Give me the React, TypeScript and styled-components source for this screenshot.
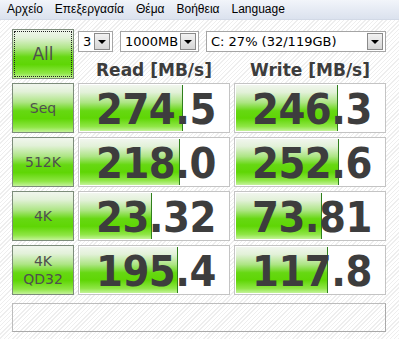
import React from "react";
import styled, { createGlobalStyle } from "styled-components";

const GlobalStyle = createGlobalStyle`
  html, body {
    margin: 0;
    padding: 0;
  }
  body {
    width: 399px;
    height: 339px;
    overflow: hidden;
    font-family: "DejaVu Sans", Verdana, sans-serif;
    background-color: #ffffff;
    background-image: repeating-linear-gradient(
      135deg,
      #ffffff 0px,
      #ffffff 2px,
      #eeeeee 2px,
      #eeeeee 3px
    );
  }
`;

const MenuBar = styled.nav`
  display: flex;
  height: 19px;
  align-items: center;
  padding-left: 1px;
  background: linear-gradient(to bottom, #f2f5fa 0%, #e6ebf4 50%, #dbe2ee 100%);
  border-bottom: 1px solid #d2d9e6;
  font-family: "Liberation Sans", Arial, sans-serif;
  font-size: 12px;
  color: #000000;
`;

const MenuItem = styled.span`
  padding: 0 6px;
  line-height: 19px;
`;

const Main = styled.main`
  display: grid;
  grid-template-columns: 62px 152px 152px;
  grid-auto-rows: 50px;
  column-gap: 4px;
  row-gap: 4px;
  padding: 9px 0 0 12px;
`;

const GREEN = `linear-gradient(
  to bottom,
  #f1f6ee 0%,
  #e2f1d8 16%,
  #ade584 38%,
  #66d812 56%,
  #5fd605 72%,
  #8fe646 90%,
  #c4f39a 100%
)`;

const TestButton = styled.div<{ $big?: boolean }>`
  box-sizing: border-box;
  display: flex;
  flex-direction: column;
  align-items: center;
  justify-content: center;
  position: relative;
  border: 1px solid #7c8c7a;
  background: ${GREEN};
  color: #4f4f4f;
  font-family: "DejaVu Sans", sans-serif;
  font-size: ${(p) => (p.$big ? "17px" : "14px")};
  line-height: 18px;
`;

const FocusRing = styled.span`
  position: absolute;
  inset: 1px;
  border: 1px dotted #222222;
`;

const TopArea = styled.div`
  grid-column: 2 / span 2;
  display: grid;
  grid-template-columns: 152px 152px;
  grid-template-rows: 21px 1fr;
  column-gap: 4px;
  padding-top: 2px;
`;

const ComboRow = styled.div`
  grid-column: 1 / span 2;
  display: flex;
  gap: 7px;
`;

const Combo = styled.div<{ $w: number }>`
  box-sizing: border-box;
  width: ${(p) => p.$w}px;
  height: 21px;
  display: flex;
  align-items: center;
  justify-content: space-between;
  padding: 1px 2px 1px 4px;
  background: #ffffff;
  border: 1px solid #a5a5a5;
  font-family: "DejaVu Sans", sans-serif;
  font-size: 13px;
  color: #000000;
`;

const DropButton = styled.span`
  box-sizing: border-box;
  width: 16px;
  height: 17px;
  display: flex;
  align-items: center;
  justify-content: center;
  border: 1px solid #8a8a8a;
  background: linear-gradient(to bottom, #f2f2f2 0%, #e4e4e4 50%, #d6d6d6 100%);
`;

const Arrow = styled.span`
  width: 0;
  height: 0;
  border-left: 4px solid transparent;
  border-right: 4px solid transparent;
  border-top: 4px solid #000000;
`;

const Header = styled.div`
  display: flex;
  justify-content: center;
  align-items: center;
  font-family: "DejaVu Sans", Verdana, sans-serif;
  font-weight: bold;
  font-size: 17px;
  color: #3c3c3c;
  padding-top: 8px;
`;

const Cell = styled.div`
  box-sizing: border-box;
  position: relative;
  border: 1px solid #c4c4c4;
  background: #ffffff;
  overflow: hidden;
`;

const Bar = styled.div`
  position: absolute;
  left: 1px;
  top: 1px;
  bottom: 1px;
  background: ${GREEN};
  border-right: 1px solid #2f7f1c;
`;

const Value = styled.div`
  position: relative;
  padding-left: 17px;
  height: 100%;
  display: flex;
  align-items: center;
  font-family: "DejaVu Sans Condensed", "DejaVu Sans", sans-serif;
  font-weight: bold;
  font-size: 43px;
  letter-spacing: -0.5px;
  color: #3d3d3d;
  line-height: 1;
  padding-top: 3px;
  box-sizing: border-box;
`;

const Comment = styled.div`
  grid-column: 1 / span 3;
  box-sizing: border-box;
  height: 29px;
  margin-top: 4px;
  border: 1px solid #a9a9a9;
  border-top-color: #bcbcbc;
  border-left-color: #bcbcbc;
`;

type Row = { label: string[]; read: string; readBar: number; write: string; writeBar: number };

const rows: Row[] = [
  { label: ["Seq"], read: "274.5", readBar: 102, write: "246.3", writeBar: 101 },
  { label: ["512K"], read: "218.0", readBar: 99, write: "252.6", writeBar: 102 },
  { label: ["4K"], read: "23.32", readBar: 71, write: "73.81", writeBar: 85 },
  { label: ["4K", "QD32"], read: "195.4", readBar: 97, write: "117.8", writeBar: 91 },
];

const menu = ["Αρχείο", "Επεξεργασία", "Θέμα", "Βοήθεια", "Language"];

export default function App() {
  return (
    <>
      <GlobalStyle />
      <MenuBar>
        {menu.map((m) => (
          <MenuItem key={m}>{m}</MenuItem>
        ))}
      </MenuBar>
      <Main>
        <TestButton $big>
          <FocusRing />
          All
        </TestButton>
        <TopArea>
          <ComboRow>
            <Combo $w={35}>
              3
              <DropButton>
                <Arrow />
              </DropButton>
            </Combo>
            <Combo $w={79}>
              1000MB
              <DropButton>
                <Arrow />
              </DropButton>
            </Combo>
            <Combo $w={180}>
              C: 27% (32/119GB)
              <DropButton>
                <Arrow />
              </DropButton>
            </Combo>
          </ComboRow>
          <Header>Read [MB/s]</Header>
          <Header>Write [MB/s]</Header>
        </TopArea>
        {rows.map((r) => (
          <React.Fragment key={r.read}>
            <TestButton>
              {r.label.map((l) => (
                <span key={l}>{l}</span>
              ))}
            </TestButton>
            <Cell>
              <Bar style={{ width: r.readBar }} />
              <Value>{r.read}</Value>
            </Cell>
            <Cell>
              <Bar style={{ width: r.writeBar }} />
              <Value>{r.write}</Value>
            </Cell>
          </React.Fragment>
        ))}
        <Comment />
      </Main>
    </>
  );
}
